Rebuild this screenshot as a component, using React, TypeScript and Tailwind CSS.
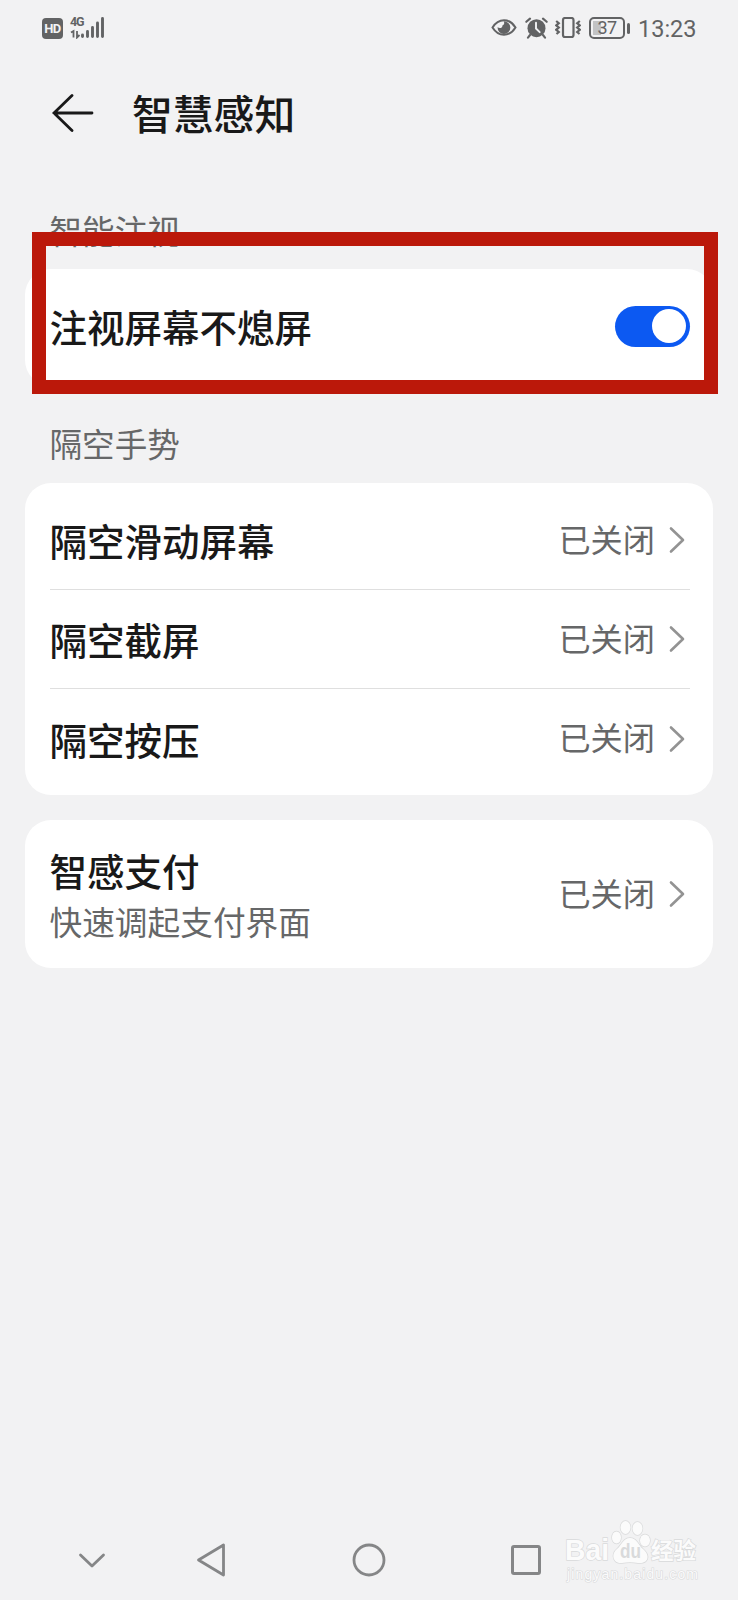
import React from 'react';

const ChevronRight: React.FC = () => (
  <svg className="ml-[14px] mr-[5px] shrink-0" width="16" height="28" viewBox="0 0 16 28" fill="none">
    <path d="M2 2.5L14 14L2 25.5" stroke="#939393" strokeWidth="2.6" strokeLinecap="round" strokeLinejoin="round" />
  </svg>
);

const StatusBar: React.FC = () => (
  <div className="flex items-start h-14 pt-[17px] pl-[42px] pr-[41px] text-[#626364]">
    <div className="flex items-center justify-center w-[21px] h-[21px] mt-px rounded-[4px] bg-[#626364] text-[#f2f3f5] text-[13px] leading-none tracking-[-0.5px] font-bold font-['Roboto',sans-serif]">
      HD
    </div>
    <div className="relative ml-[7px] w-[36px] h-[22px]">
      <span className="absolute left-0 top-0 text-[12.5px] leading-[10px] tracking-[-1.2px] font-bold font-['Roboto',sans-serif]">4G</span>
      <svg width="36" height="22" viewBox="0 0 36 22" fill="none" stroke="currentColor">
        <path d="M1 15.5L3.5 14V20.5M7 14V20.5L9.5 18" strokeWidth="1.8" />
        <path d="M12.5 18V19.5M17.5 14.5V19.5M22.5 10.5V19.5M27.5 6V19.5M32.5 1.5V19.5" strokeWidth="2.9" strokeLinecap="round" />
      </svg>
    </div>

    <div className="flex items-start ml-auto">
      <svg width="26" height="22" viewBox="0 0 26 22" fill="none">
        <path d="M1.5 10.5C7.5 0.8 18.5 0.8 24.5 10.5C18.5 20.2 7.5 20.2 1.5 10.5Z" stroke="currentColor" strokeWidth="2" />
        <path d="M12.6 4.2A6.4 6.4 0 1 1 6.6 10.2C8.8 11.8 11.6 10.8 11.4 8.4C13.2 8.2 13.8 5.8 12.6 4.2Z" fill="currentColor" />
      </svg>
      <svg className="ml-[8px]" width="23" height="22" viewBox="0 0 23 22" fill="none">
        <circle cx="11.5" cy="11.2" r="9" fill="currentColor" />
        <path d="M1.3 4.8L5 1.6M21.7 4.8L18 1.6M5 18L3 20.6M18 18L20 20.6" stroke="currentColor" strokeWidth="2.1" strokeLinecap="round" />
        <path d="M11 5.8V11.5L14.7 15.2" stroke="#f2f3f5" strokeWidth="1.9" strokeLinecap="round" />
      </svg>
      <svg className="ml-[7px]" width="26" height="22" viewBox="0 0 26 22" fill="none" stroke="currentColor">
        <rect x="8" y="1" width="10.5" height="19" rx="2" strokeWidth="2.2" />
        <path d="M1.2 4L3.8 6.2L1.2 8.4L3.8 10.6L1.2 12.8L3.8 15L1.5 17M24.8 4L22.2 6.2L24.8 8.4L22.2 10.6L24.8 12.8L22.2 15L24.5 17" strokeWidth="2.2" />
      </svg>
      <div className="relative ml-[8px] flex items-center justify-center w-[36px] h-[22px] rounded-[5px] border-2 border-[#626364]">
        <span className="absolute left-[2px] top-[2px] w-[8px] h-[14px] bg-[#c2c3c4]" />
        <span className="relative text-[18px] leading-none tracking-[-0.6px] font-['Roboto',sans-serif]">37</span>
      </div>
      <div className="ml-[2px] mt-[6px] w-[3px] h-[11px] rounded-full bg-[#626364]" />
      <span className="ml-[8px] w-[59px] whitespace-nowrap text-[23.5px] leading-[24px] font-['Roboto',sans-serif]">13:23</span>
    </div>
  </div>
);

const SectionTitle: React.FC<{ children: React.ReactNode }> = ({ children }) => (
  <h2 className="flex items-center h-[48px] pb-[4px] px-[49.5px] text-[32.6px] text-[#666768]">{children}</h2>
);

interface RowProps {
  title: string;
  subtitle?: string;
}

const SettingRow: React.FC<RowProps> = ({ title, subtitle }) => (
  <div className={subtitle ? 'flex items-center h-[148px]' : 'flex items-center h-[99px]'}>
    <div>
      <div className="text-[37.5px] leading-[52px] font-medium text-[#191919]">{title}</div>
      {subtitle && <div className="pt-px text-[32.7px] leading-[48px] text-[#666768]">{subtitle}</div>}
    </div>
    <span className="ml-auto pb-[5px] text-[32.2px] leading-[48px] text-[#666768]">已关闭</span>
    <ChevronRight />
  </div>
);

const gestures = ['隔空滑动屏幕', '隔空截屏', '隔空按压'];

const Watermark: React.FC = () => (
  <div className="absolute left-[564px] top-[1519px] w-[150px] h-[66px] leading-none">
    <svg width="150" height="66" viewBox="0 0 150 66" fill="#fbfbfb" stroke="#d9dadb" strokeWidth="1.4" paintOrder="stroke">
      <ellipse cx="52.5" cy="18.5" rx="4.5" ry="6" />
      <ellipse cx="61.5" cy="8.5" rx="5" ry="6.5" />
      <ellipse cx="73.5" cy="9.5" rx="5" ry="6.5" />
      <ellipse cx="81" cy="21.5" rx="5" ry="6" />
      <path d="M66 19C59 19 58 26 53 30C46 36 50 45 58 44C63 43 69 43 74 44C84 45 87 37 79 30C74 26 73 19 66 19Z" />
      <g fontFamily="'Liberation Sans', sans-serif">
        <text x="1" y="41" fontSize="29" fontWeight="700" textLength="44" lengthAdjust="spacingAndGlyphs">Bai</text>
        <text x="56" y="39" fontSize="20" fontWeight="700" fill="#d9dadb" stroke="none" textLength="21" lengthAdjust="spacingAndGlyphs">du</text>
        <text x="87" y="40" fontSize="22.5" fontWeight="700" fontFamily="'Noto Sans CJK SC', sans-serif" textLength="45">经验</text>
        <text x="3" y="60" fontSize="14" textLength="131" lengthAdjust="spacing" strokeWidth="1.2">jingyan.baidu.com</text>
      </g>
    </svg>
  </div>
);

const App: React.FC = () => {
  return (
    <div className="relative flex flex-col w-[738px] h-[1600px] overflow-hidden bg-[#f2f2f3] font-['Noto_Sans_CJK_SC',sans-serif]">
      <StatusBar />

      <header className="flex items-center h-[113px] pl-[52px]">
        <svg width="42" height="40" viewBox="0 0 42 40" fill="none" stroke="#191919" strokeWidth="2.8" strokeLinecap="round">
          <path d="M2 20H40M20 2.5L2 20L20 37.5" />
        </svg>
        <h1 className="ml-[38px] text-[40.8px] leading-[60px] font-medium text-[#191919]">智慧感知</h1>
      </header>

      <main className="flex flex-col pt-[39px]">
        <SectionTitle>智能注视</SectionTitle>
        <section className="mx-[25px] mt-[13px] h-[117px] pl-[24.5px] pr-[23px] flex items-center justify-between rounded-[26px] bg-white">
          <span className="pb-[3px] text-[37.5px] leading-[52px] font-medium text-[#191919]">注视屏幕不熄屏</span>
          <button className="flex items-center justify-end w-[75px] h-[41px] mt-[-3px] pr-[4px] rounded-full bg-[#0c59f2]">
            <span className="w-[34px] h-[34px] rounded-full bg-white" />
          </button>
        </section>

        <div className="pt-[35px]">
          <SectionTitle>隔空手势</SectionTitle>
        </div>
        <section className="mx-[25px] mt-[14px] pt-[8px] pb-[7px] pl-[24.5px] pr-[23px] rounded-[26px] bg-white divide-y divide-[#dfdfdf]">
          {gestures.map((title) => (
            <SettingRow key={title} title={title} />
          ))}
        </section>

        <section className="mx-[25px] mt-[25px] pl-[24.5px] pr-[23px] rounded-[26px] bg-white">
          <SettingRow title="智感支付" subtitle="快速调起支付界面" />
        </section>
      </main>

      <nav className="mt-auto flex items-center h-[80px] pl-[77px] text-[#858687]">
        <svg width="30" height="36" viewBox="0 0 30 36" fill="none" stroke="currentColor" strokeWidth="2.8" strokeLinecap="round" strokeLinejoin="round">
          <path d="M3.5 13L15 24L26.5 13" />
        </svg>
        <svg className="ml-[88px]" width="34" height="36" viewBox="0 0 34 36" fill="none" stroke="currentColor" strokeWidth="2.8" strokeLinejoin="round">
          <path d="M28.5 3V33L3.5 18Z" />
        </svg>
        <svg className="ml-[122px]" width="36" height="36" viewBox="0 0 36 36" fill="none" stroke="currentColor" strokeWidth="2.8">
          <circle cx="18" cy="18" r="15" />
        </svg>
        <div className="ml-[124px] w-[30px] h-[30px] rounded-[3px] border-3 border-[#858687]" />
      </nav>

      {/* highlight box around the gaze setting */}
      <div className="absolute left-[31.5px] top-[232px] w-[686px] h-[161.5px] border-[14px] border-[#bb180a]" />
      <Watermark />
    </div>
  );
};

export default App;
